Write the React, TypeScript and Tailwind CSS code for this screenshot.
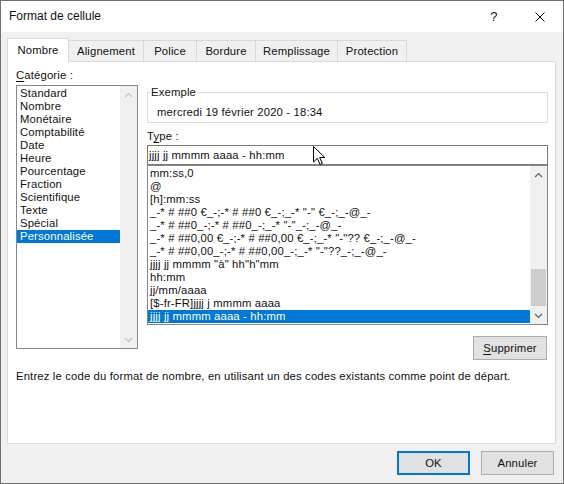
import React from "react";

const categories = [
  "Standard",
  "Nombre",
  "Monétaire",
  "Comptabilité",
  "Date",
  "Heure",
  "Pourcentage",
  "Fraction",
  "Scientifique",
  "Texte",
  "Spécial",
  "Personnalisée",
];

const formats = [
  "mm:ss,0",
  "@",
  "[h]:mm:ss",
  '_-* # ##0 €_-;-* # ##0 €_-;_-* "-" €_-;_-@_-',
  '_-* # ##0_-;-* # ##0_-;_-* "-"_-;_-@_-',
  '_-* # ##0,00 €_-;-* # ##0,00 €_-;_-* "-"?? €_-;_-@_-',
  '_-* # ##0,00_-;-* # ##0,00_-;_-* "-"??_-;_-@_-',
  'jjjj jj mmmm "à" hh"h"mm',
  "hh:mm",
  "jj/mm/aaaa",
  "[$-fr-FR]jjjj j mmmm aaaa",
  "jjjj jj mmmm aaaa - hh:mm",
];

const tabs = [
  { label: "Nombre", w: "w-[62px]" },
  { label: "Alignement", w: "w-[75px]" },
  { label: "Police", w: "w-[53px]" },
  { label: "Bordure", w: "w-[59px]" },
  { label: "Remplissage", w: "w-[82px]" },
  { label: "Protection", w: "w-[69px]" },
];

function Chevron({ up, light }: { up?: boolean; light?: boolean }) {
  return (
    <svg width="9" height="6" viewBox="0 0 9 6" className="block">
      <path
        d={up ? "M1 5 L4.5 1.5 L8 5" : "M1 1 L4.5 4.5 L8 1"}
        fill="none"
        stroke={light ? "#c2c2c2" : "#606060"}
        strokeWidth="1.2"
      />
    </svg>
  );
}

function ScrollBar({ disabled, thumb }: { disabled?: boolean; thumb?: boolean }) {
  return (
    <div className="w-[17px] bg-[#f0f0f0] flex flex-col">
      <div className="h-[17px] flex items-center justify-center">
        <Chevron up light={disabled} />
      </div>
      <div className="flex-1 flex flex-col justify-end">
        {thumb && <div className="h-[37px] mx-[1px] mb-[1px] bg-[#cdcdcd]" />}
      </div>
      <div className="h-[17px] flex items-center justify-center">
        <Chevron light={disabled} />
      </div>
    </div>
  );
}

function Btn({ children, primary, w }: { children: React.ReactNode; primary?: boolean; w: string }) {
  return (
    <div
      className={`${w} h-[24px] bg-[#e1e1e1] border flex items-center justify-center ${
        primary ? "border-[#0078d7] shadow-[inset_0_0_0_1px_#0078d7]" : "border-[#adadad]"
      }`}
    >
      {children}
    </div>
  );
}

export default function App() {
  return (
    <div className="relative w-[564px] h-[484px] bg-[#f0f0f0] border border-[#707070] flex flex-col text-[11.3px] leading-[13px] tracking-[0.15px] text-[#111] font-['Liberation_Sans',Arial,sans-serif] overflow-hidden">
      {/* title bar */}
      <div className="h-[31px] bg-white flex items-center pl-[8px] shrink-0">
        <span className="text-[12px] tracking-normal">Format de cellule</span>
        <div className="ml-auto flex h-full">
          <div className="w-[46px] flex items-center justify-center text-[13px]">?</div>
          <div className="w-[46px] flex items-center justify-center">
            <svg width="10" height="10" viewBox="0 0 10 10">
              <path d="M0.5 0.5 L9.5 9.5 M9.5 0.5 L0.5 9.5" stroke="#000" strokeWidth="1" />
            </svg>
          </div>
        </div>
      </div>

      {/* tabs */}
      <div className="pl-[6px] pt-[6px] shrink-0">
        <div className="flex items-end h-[23px]">
          {tabs.map((t, i) =>
            i === 0 ? (
              <div
                key={t.label}
                className={`${t.w} h-[24px] -mb-[1px] bg-white border border-b-0 border-[#d9d9d9] flex items-center justify-center relative z-10`}
              >
                {t.label}
              </div>
            ) : (
              <div
                key={t.label}
                className={`${t.w} h-[21px] bg-[#f0f0f0] border-t border-r border-[#d9d9d9] flex items-center justify-center`}
              >
                {t.label}
              </div>
            )
          )}
        </div>
        <div className="w-[549px] h-[383px] bg-white border border-[#d9d9d9] pl-[8px] pt-[7px] flex flex-col">
          <div className="flex">
            {/* category column */}
            <div className="w-[122px] flex flex-col">
              <div>
                <span className="underline underline-offset-[2px]">C</span>atégorie :
              </div>
              <div className="mt-[3px] h-[264px] border border-[#828790] flex">
                <div className="flex-1 pt-[1px]">
                  {categories.map((c, i) => (
                    <div
                      key={c}
                      className={`h-[13px] pl-[3px] whitespace-nowrap ${
                        i === categories.length - 1 ? "bg-[#0078d7] text-white" : ""
                      }`}
                    >
                      {c}
                    </div>
                  ))}
                </div>
                <ScrollBar disabled />
              </div>
            </div>

            {/* right column */}
            <div className="ml-[9px] w-[401px] mt-[17px] flex flex-col">
              <fieldset className="border border-[#dcdcdc] pb-[3px]">
                <legend className="ml-[2px] px-[1px]">Exemple</legend>
                <div className="pt-[7px] pl-[9px]">mercredi 19 février 2020 - 18:34</div>
              </fieldset>
              <div className="mt-[7px]">
                T<span className="underline underline-offset-[2px]">y</span>pe :
              </div>
              <div className="mt-[2px] h-[20px] border border-[#7a7a7a] flex items-center pl-[1px]">
                jjjj jj mmmm aaaa - hh:mm
              </div>
              <div className="h-[160px] border border-[#828790] flex">
                <div className="flex-1 pt-[1px]">
                  {formats.map((f, i) => (
                    <div
                      key={i}
                      className={`h-[13px] pl-[2px] whitespace-pre ${
                        i === formats.length - 1 ? "bg-[#0078d7] text-white" : ""
                      }`}
                    >
                      {f}
                    </div>
                  ))}
                </div>
                <ScrollBar thumb />
              </div>
              <div className="mt-[11px] self-end mr-[1px]">
                <Btn w="w-[74px]">
                  <span className="underline underline-offset-[2px]">S</span>upprimer
                </Btn>
              </div>
            </div>
          </div>
          <div className="mt-[10px]">
            Entrez le code du format de nombre, en utilisant un des codes existants comme point de départ.
          </div>
        </div>
      </div>

      {/* dialog buttons */}
      <div className="flex justify-end gap-[11px] pr-[9px] mt-[7px]">
        <Btn primary w="w-[73px]">OK</Btn>
        <Btn w="w-[73px]">Annuler</Btn>
      </div>

      {/* mouse pointer */}
      <svg
        className="absolute left-[312px] top-[145px]"
        width="13"
        height="20"
        viewBox="0 0 13 20"
      >
        <path
          d="M0.5 0.5 L0.5 16 L4.3 12.3 L7 18.5 L9.3 17.5 L6.7 11.5 L11.8 11.5 Z"
          fill="#fff"
          stroke="#000"
          strokeWidth="1"
          strokeLinejoin="miter"
        />
      </svg>
    </div>
  );
}
